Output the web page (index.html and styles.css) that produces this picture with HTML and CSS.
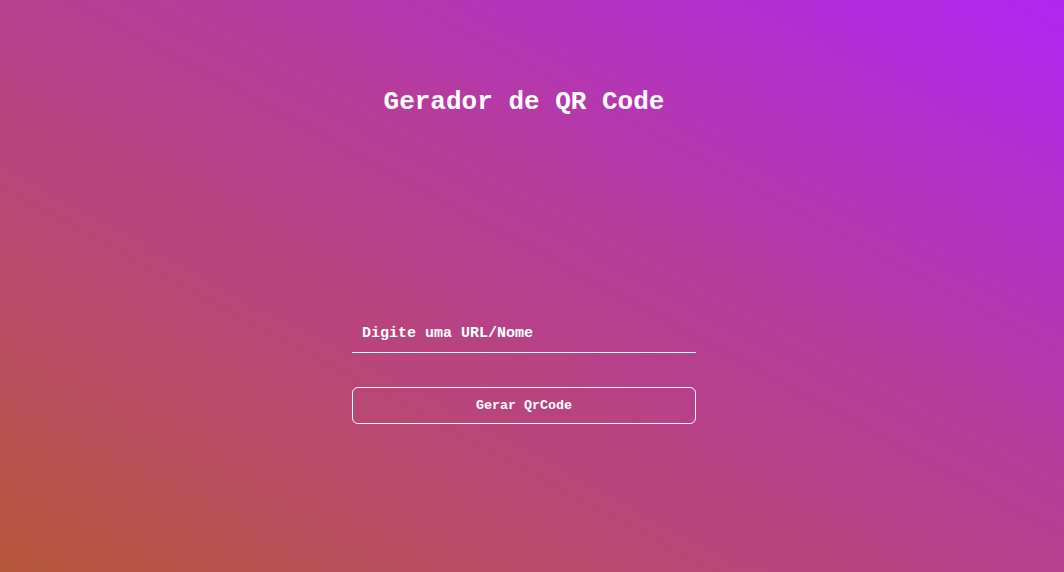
FILE: index.html
```html
<!DOCTYPE html>
<html lang="pt-BR">
<head>
<meta charset="utf-8">
<title>Gerador de QR Code</title>
<link rel="stylesheet" href="styles.css">
</head>
<body>
<main class="page">
  <h1 class="title">Gerador de QR Code</h1>
  <form class="form">
    <input class="field" type="text" placeholder="Digite uma URL/Nome">
    <button class="btn" type="button">Gerar QrCode</button>
  </form>
</main>
</body>
</html>
```
FILE: styles.css
```css
html, body {
  margin: 0;
  height: 100%;
}
body {
  background: linear-gradient(to top right, #b5573a 0%, #b84870 30%, #b63c9c 60%, #b026f2 100%);
  font-family: "Liberation Mono", "Courier New", monospace;
  color: #fff;
}
.page {
  height: 100%;
  box-sizing: border-box;
  padding: 87px 16px 0 0;
  display: flex;
  flex-direction: column;
  align-items: center;
}
.title {
  margin: 0;
  font-size: 26px;
  line-height: 30px;
  font-weight: bold;
}
.form {
  margin-top: 197px;
  width: 344px;
  display: flex;
  flex-direction: column;
  gap: 34px;
}
.field {
  height: 39px;
  box-sizing: border-box;
  padding: 0 10px;
  background: transparent;
  border: none;
  border-bottom: 1px solid #fff;
  font-family: inherit;
  font-size: 15px;
  font-weight: bold;
  color: #fff;
  outline: none;
}
.field::placeholder {
  color: #fff;
  opacity: 1;
}
.btn {
  height: 37px;
  background: transparent;
  border: 1px solid #fff;
  border-radius: 6px;
  font-family: inherit;
  font-size: 13.333px;
  font-weight: bold;
  color: #fff;
}
```
